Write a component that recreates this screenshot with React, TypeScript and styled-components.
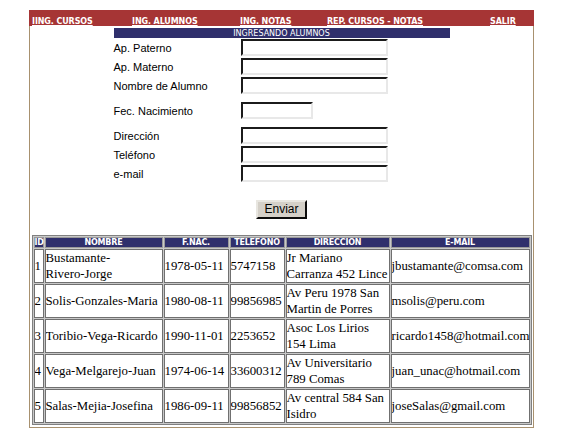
import styled, { createGlobalStyle } from "styled-components";

const GlobalStyle = createGlobalStyle`
	body {
		margin: 0;
		background: #ffffff;
		font-family: "Liberation Sans", Arial, sans-serif;
	}
`;

type Alumno = {
	id: number;
	nombre: string;
	fnac: string;
	telefono: string;
	direccion: string;
	email: string;
};

const alumnos: Alumno[] = [
	{ id: 1, nombre: "Bustamante-\nRivero-Jorge", fnac: "1978-05-11", telefono: "5747158", direccion: "Jr Mariano Carranza 452 Lince", email: "jbustamante@comsa.com" },
	{ id: 2, nombre: "Solis-Gonzales-Maria", fnac: "1980-08-11", telefono: "99856985", direccion: "Av Peru 1978 San Martin de Porres", email: "msolis@peru.com" },
	{ id: 3, nombre: "Toribio-Vega-Ricardo", fnac: "1990-11-01", telefono: "2253652", direccion: "Asoc Los Lirios 154 Lima", email: "ricardo1458@hotmail.com" },
	{ id: 4, nombre: "Vega-Melgarejo-Juan", fnac: "1974-06-14", telefono: "33600312", direccion: "Av Universitario 789 Comas", email: "juan_unac@hotmail.com" },
	{ id: 5, nombre: "Salas-Mejia-Josefina", fnac: "1986-09-11", telefono: "99856852", direccion: "Av central 584 San Isidro", email: "joseSalas@gmail.com" },
];

const links = ["IING. CURSOS", "ING. ALUMNOS", "ING. NOTAS", "REP. CURSOS - NOTAS", "SALIR"];

const campos = [
	{ label: "Ap. Paterno", size: "full" },
	{ label: "Ap. Materno", size: "full" },
	{ label: "Nombre de Alumno", size: "full" },
	{ label: "", size: "spacer" },
	{ label: "Fec. Nacimiento", size: "short" },
	{ label: "", size: "spacer" },
	{ label: "Dirección", size: "full" },
	{ label: "Teléfono", size: "full" },
	{ label: "e-mail", size: "full" },
];

// anchos incluyen el borde de la celda
const columnas = [
	{ titulo: "ID", ancho: 10 },
	{ titulo: "NOMBRE", ancho: 118 },
	{ titulo: "F.NAC.", ancho: 65 },
	{ titulo: "TELEFONO", ancho: 55 },
	{ titulo: "DIRECCION", ancho: 104 },
	{ titulo: "E-MAIL", ancho: 139 },
];

export default function App() {
	return (
		<>
			<GlobalStyle />
			<Page>
				<Frame>
					<NavBar>
						{links.map((link) => (
							<NavCell key={link}>
								<NavLink href="#">{link}</NavLink>
							</NavCell>
						))}
					</NavBar>
					<FormBox>
						<FormTitle>INGRESANDO ALUMNOS</FormTitle>
						<FormGrid>
							{campos.map((campo, index) =>
								campo.size === "spacer" ? (
									<Spacer key={`sp_${index}`} />
								) : (
									<FieldRow key={campo.label}>
										<Label>{campo.label}</Label>
										<Input $short={campo.size === "short"} />
									</FieldRow>
								)
							)}
						</FormGrid>
						<ButtonRow>
							<SubmitButton type="button">Enviar</SubmitButton>
						</ButtonRow>
					</FormBox>
					<Table>
						<thead>
							<tr>
								{columnas.map((col) => (
									<HeadCell key={col.titulo} $ancho={col.ancho}>
										{col.titulo}
									</HeadCell>
								))}
							</tr>
						</thead>
						<tbody>
							{alumnos.map((a) => (
								<tr key={a.id}>
									<Cell>{a.id}</Cell>
									<Cell>{a.nombre}</Cell>
									<Cell>{a.fnac}</Cell>
									<Cell>{a.telefono}</Cell>
									<Cell>{a.direccion}</Cell>
									<Cell>{a.email}</Cell>
								</tr>
							))}
						</tbody>
					</Table>
				</Frame>
			</Page>
		</>
	);
}

const Page = styled.div`
	padding: 10px 0 0 29px;
`;

const Frame = styled.div`
	width: 503px;
	border: 1px solid #a8916f;
	border-top: none;
	padding-bottom: 2px;
	background: #ffffff;
`;

const NavBar = styled.div`
	display: grid;
	grid-template-columns: 100px 108px 87px 163px 1fr;
	height: 16px;
	align-items: center;
	margin: 0 -1px;
	background: #a63535;
`;

const NavCell = styled.div`
	padding-left: 3px;
`;

const NavLink = styled.a`
	color: #ffffff;
	font-family: "DejaVu Sans", Verdana, sans-serif;
	font-size: 8px;
	font-weight: 600;
	letter-spacing: -0.1px;
	text-decoration: underline;
`;

const FormBox = styled.div`
	display: flex;
	flex-direction: column;
	align-items: center;
	padding-top: 2px;
`;

const FormTitle = styled.div`
	width: 336px;
	height: 10px;
	line-height: 11px;
	background: #2f2f6c;
	color: #ffffff;
	font-family: "DejaVu Sans", Verdana, sans-serif;
	font-size: 8px;
	text-align: center;
	overflow: hidden;
`;

const FormGrid = styled.div`
	width: 336px;
	display: flex;
	flex-direction: column;
	gap: 2px;
	padding-top: 1px;
`;

const FieldRow = styled.div`
	display: grid;
	grid-template-columns: 127px 1fr;
	align-items: center;
	height: 17px;
`;

const Spacer = styled.div`
	height: 4px;
`;

const Label = styled.span`
	font-size: 11px;
	color: #000000;
`;

const Input = styled.input<{ $short?: boolean }>`
	box-sizing: border-box;
	width: ${({ $short }) => ($short ? "72px" : "147px")};
	height: 17px;
	margin: 0;
	padding: 0;
	border: 2px inset #d4d0c8;
	border-top-color: #707070;
	border-left-color: #707070;
	border-right-color: #e8e8e8;
	border-bottom-color: #e8e8e8;
	background: #ffffff;
`;

const ButtonRow = styled.div`
	padding: 17px 0 16px;
`;

const SubmitButton = styled.button`
	width: 51px;
	height: 19px;
	padding: 0;
	background: #d4d0c8;
	border: 2px outset #e8e6e0;
	border-right-color: #606060;
	border-bottom-color: #606060;
	font-family: "Liberation Sans", Arial, sans-serif;
	font-size: 12px;
	color: #000000;
`;

const Table = styled.table`
	width: 499px;
	margin: 0 auto;
	table-layout: fixed;
	border-collapse: separate;
	border-spacing: 1px;
	border: 1px solid #808080;
	background: #c8c8c8;
`;

const HeadCell = styled.th<{ $ancho: number }>`
	box-sizing: border-box;
	width: ${({ $ancho }) => $ancho}px;
	height: 11px;
	padding: 0;
	border: 1px solid #9a9a9a;
	background: #2f2f6c;
	color: #ffffff;
	font-family: "DejaVu Sans", Verdana, sans-serif;
	font-size: 8px;
	font-weight: bold;
	line-height: 9px;
	letter-spacing: -0.2px;
	text-align: center;
	white-space: nowrap;
`;

const Cell = styled.td`
	padding: 0;
	border: 1px solid #707070;
	background: #ffffff;
	font-family: "Liberation Serif", "Times New Roman", serif;
	font-size: 12.8px;
	line-height: 16px;
	height: 32px;
	vertical-align: middle;
	color: #000000;
	white-space: pre-line;
	overflow: hidden;
`;
